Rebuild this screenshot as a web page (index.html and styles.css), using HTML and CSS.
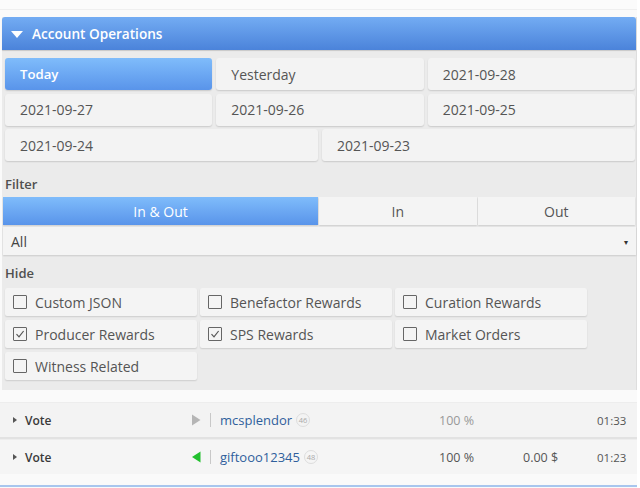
FILE: index.html
```html
<!DOCTYPE html>
<html>
<head>
<meta charset="utf-8">
<link rel="stylesheet" href="styles.css">
</head>
<body>
<div class="top-strip"></div>
<div class="panel">
  <div class="panel-head">
    <span class="caret"></span>
    <span class="head-title">Account Operations</span>
  </div>
  <div class="dates">
    <div class="btn active c2">Today</div>
    <div class="btn c2">Yesterday</div>
    <div class="btn c2">2021-09-28</div>
    <div class="btn c2">2021-09-27</div>
    <div class="btn c2">2021-09-26</div>
    <div class="btn c2">2021-09-25</div>
    <div class="btn c3">2021-09-24</div>
    <div class="btn c3">2021-09-23</div>
  </div>
  <div class="label">Filter</div>
  <div class="seg">
    <div class="seg-item active wide">In &amp; Out</div>
    <div class="seg-item">In</div>
    <div class="seg-item">Out</div>
  </div>
  <div class="select"><span>All</span><span class="sel-arrow">▾</span></div>
  <div class="label hide-label">Hide</div>
  <div class="checks">
    <div class="check"><span class="box"></span>Custom JSON</div>
    <div class="check"><span class="box"></span>Benefactor Rewards</div>
    <div class="check"><span class="box"></span>Curation Rewards</div>
    <div class="check"><span class="box checked"><svg viewBox="0 0 12 12" width="12" height="12"><path d="M2.5 6.2 L5 8.8 L9.6 3" fill="none" stroke="#555" stroke-width="1.2"/></svg></span>Producer Rewards</div>
    <div class="check"><span class="box checked"><svg viewBox="0 0 12 12" width="12" height="12"><path d="M2.5 6.2 L5 8.8 L9.6 3" fill="none" stroke="#555" stroke-width="1.2"/></svg></span>SPS Rewards</div>
    <div class="check"><span class="box"></span>Market Orders</div>
    <div class="check"><span class="box"></span>Witness Related</div>
  </div>
</div>
<div class="ops">
  <div class="op">
    <div class="op-type"><span class="tri"></span>Vote</div>
    <div class="op-dir"><svg width="10" height="12" viewBox="0 0 10 12"><path d="M1 0.5 L9.5 6 L1 11.5 Z" fill="#b5b5b5"/></svg></div>
    <div class="op-sep"></div>
    <div class="op-user"><span class="user">mcsplendor</span><span class="rep">46</span></div>
    <div class="op-pct muted">100 %</div>
    <div class="op-val"></div>
    <div class="op-time">01:33</div>
  </div>
  <div class="op">
    <div class="op-type"><span class="tri"></span>Vote</div>
    <div class="op-dir"><svg width="10" height="12" viewBox="0 0 10 12"><path d="M9.5 0.5 L1 6 L9.5 11.5 Z" fill="#22c02e"/></svg></div>
    <div class="op-sep"></div>
    <div class="op-user"><span class="user">giftooo12345</span><span class="rep">48</span></div>
    <div class="op-pct">100 %</div>
    <div class="op-val">0.00 $</div>
    <div class="op-time">01:23</div>
  </div>
</div>
<div class="bottom-line"></div>
</body>
</html>
```

FILE: styles.css
```css
html, body {
  margin: 0;
  padding: 0;
}
body {
  width: 640px;
  height: 488px;
  overflow: hidden;
  background: #fafafa;
  font-family: "Open Sans", "Liberation Sans", sans-serif;
  color: #555;
  border-right: 3px solid #fff;
  box-sizing: border-box;
}
.top-strip {
  height: 9px;
  background: #fbfbfb;
  border-bottom: 1px solid #efefef;
}
.panel {
  margin: 7px 0 0 2px;
  width: 635px;
  background: #ebebeb;
  border-right: 1px solid #dedede;
  padding-bottom: 10px;
  box-sizing: border-box;
}
.panel-head {
  height: 33px;
  display: flex;
  align-items: center;
  background: linear-gradient(#73acf3, #4b83da);
  border-radius: 3px 3px 0 0;
  box-shadow: 0 1px 1px rgba(0,0,0,0.15);
  color: #fff;
}
.caret {
  width: 0;
  height: 0;
  border-left: 6px solid transparent;
  border-right: 6px solid transparent;
  border-top: 7px solid #fff;
  margin: 1px 9px 0 9px;
}
.head-title {
  font-size: 13.6px;
  font-weight: 600;
}
.dates {
  display: grid;
  grid-template-columns: repeat(6, 1fr);
  column-gap: 4px;
  row-gap: 3.5px;
  padding: 8px 1px 0 3px;
}
.btn {
  height: 32px;
  display: flex;
  align-items: center;
  padding-left: 15px;
  background: #f3f3f3;
  border-radius: 3px;
  box-shadow: 0 1px 1.5px rgba(0,0,0,0.14);
  font-size: 14px;
  color: #555;
}
.c2 { grid-column: span 2; }
.c3 { grid-column: span 3; }
.btn.active {
  background: linear-gradient(#7fbcfb, #5994ea);
  color: #fff;
  font-weight: 600;
  font-size: 13.2px;
}
.label {
  font-size: 13px;
  font-weight: 600;
  color: #505050;
  padding: 14px 0 0 3px;
  line-height: 18px;
}
.seg {
  display: flex;
  margin: 4px 1px 0 1px;
  gap: 1px;
  height: 28px;
}
.seg-item {
  flex: 1;
  display: flex;
  align-items: center;
  justify-content: center;
  background: #f4f4f4;
  box-shadow: 0 1px 1.5px rgba(0,0,0,0.13);
  font-size: 14px;
  color: #555;
}
.seg-item.wide { flex: 2; }
.seg-item.active {
  background: linear-gradient(#7fbcfb, #5994ea);
  color: #fff;
}
.select {
  margin: 2px 0 0 1px;
  height: 28px;
  display: flex;
  align-items: center;
  justify-content: space-between;
  padding: 0 8px 0 8px;
  background: #f4f4f4;
  box-shadow: 0 1px 1.5px rgba(0,0,0,0.14);
  font-size: 14px;
  color: #444;
}
.sel-arrow {
  font-size: 8px;
  color: #333;
}
.hide-label {
  padding-top: 9px;
}
.checks {
  display: grid;
  grid-template-columns: repeat(3, 192px);
  column-gap: 3px;
  row-gap: 4px;
  padding: 6px 0 0 3px;
}
.check {
  height: 28px;
  display: flex;
  align-items: center;
  padding-left: 8px;
  background: #f4f4f4;
  border-radius: 2px;
  box-shadow: 0 1px 1.5px rgba(0,0,0,0.13);
  font-size: 14px;
  color: #555;
}
.box {
  width: 12px;
  height: 12px;
  border: 1.5px solid #666;
  border-radius: 1px;
  margin-right: 8px;
  display: flex;
  align-items: center;
  justify-content: center;
}
.ops {
  margin-top: 12px;
  width: 637px;
}
.op {
  height: 34px;
  display: flex;
  align-items: center;
  background: #f3f3f3;
  border-top: 1px solid #ededed;
  border-bottom: 2px solid #e2e2e2;
  font-size: 12.5px;
}
.op + .op {
  border-bottom: none;
  background: #f5f5f5;
}
.op-type {
  width: 188px;
  display: flex;
  align-items: center;
  font-weight: 600;
  font-size: 12px;
  color: #3a3a3a;
}
.tri {
  width: 0;
  height: 0;
  border-top: 3.5px solid transparent;
  border-bottom: 3.5px solid transparent;
  border-left: 4px solid #555;
  margin: 0 8px 0 13px;
}
.op-dir {
  width: 14px;
  display: flex;
  align-items: center;
  padding-left: 3px;
}
.op-sep {
  width: 1px;
  height: 14px;
  background: #c8c8c8;
  margin: 0 9px 0 5px;
}
.op-user {
  width: 219px;
  display: flex;
  align-items: center;
}
.user {
  color: #2f5f9c;
  font-size: 13px;
}
.rep {
  margin-left: 4px;
  width: 14px;
  height: 14px;
  border: 1px solid #ddd;
  border-radius: 50%;
  font-size: 7.5px;
  color: #aaa;
  display: flex;
  align-items: center;
  justify-content: center;
  box-sizing: border-box;
}
.op-pct {
  width: 84px;
  color: #555;
}
.op-pct.muted { color: #999; }
.op-val {
  width: 74px;
  color: #555;
}
.op-time {
  font-size: 11.5px;
  color: #555;
}
.bottom-line {
  margin-top: 11px;
  width: 637px;
  height: 2px;
  background: #a8c6ee;
}
```
